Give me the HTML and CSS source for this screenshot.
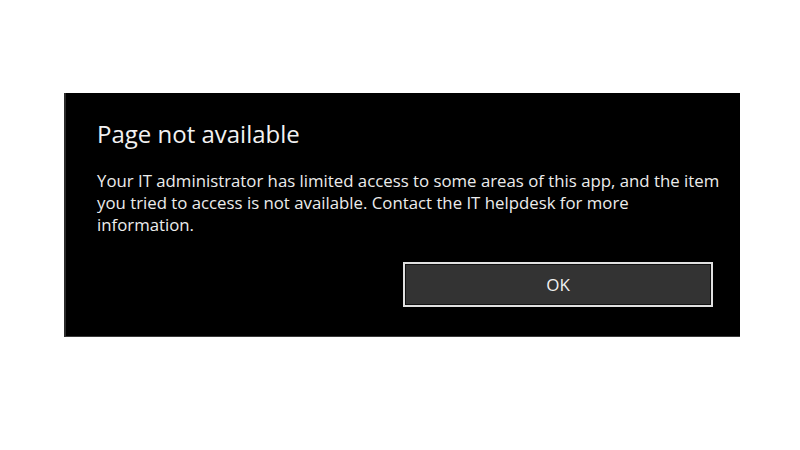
FILE: index.html
```html
<!DOCTYPE html>
<html>
<head>
<meta charset="utf-8">
<link rel="stylesheet" href="styles.css">
</head>
<body>
<div class="dialog">
  <h1 class="title">Page not available</h1>
  <p class="message">Your IT administrator has limited access to some areas of this app, and the item you tried to access is not available. Contact the IT helpdesk for more information.</p>
  <div class="actions">
    <button class="ok">OK</button>
  </div>
</div>
</body>
</html>
```
FILE: styles.css
```css
html, body {
  margin: 0;
  padding: 0;
  background: #ffffff;
}
body {
  width: 800px;
  height: 450px;
  overflow: hidden;
  font-family: "Open Sans", "Noto Sans", sans-serif;
}
.dialog {
  box-sizing: border-box;
  margin: 93px 0 0 64px;
  width: 676px;
  height: 244px;
  background: #000;
  border-left: 2px solid #2c2c2c;
  border-bottom: 1px solid #3a3a3a;
  padding: 26px 27px 0 31px;
  display: flex;
  flex-direction: column;
}
.title {
  margin: 0;
  font-weight: 400;
  font-size: 24px;
  line-height: 30px;
  color: #f2f2f2;
}
.message {
  margin: 21px 0 0 0;
  font-size: 16.8px;
  line-height: 22px;
  color: #ececec;
  width: 626px;
}
.actions {
  display: flex;
  justify-content: flex-end;
  margin-top: 26px;
}
.ok {
  box-sizing: border-box;
  width: 310px;
  height: 45px;
  background: #333333;
  border: 2px solid #e0e0e0;
  box-shadow: inset 0 0 0 1px #111;
  color: #f0f0f0;
  font-family: "Open Sans", "Noto Sans", sans-serif;
  font-size: 17px;
  padding: 0;
}
```
